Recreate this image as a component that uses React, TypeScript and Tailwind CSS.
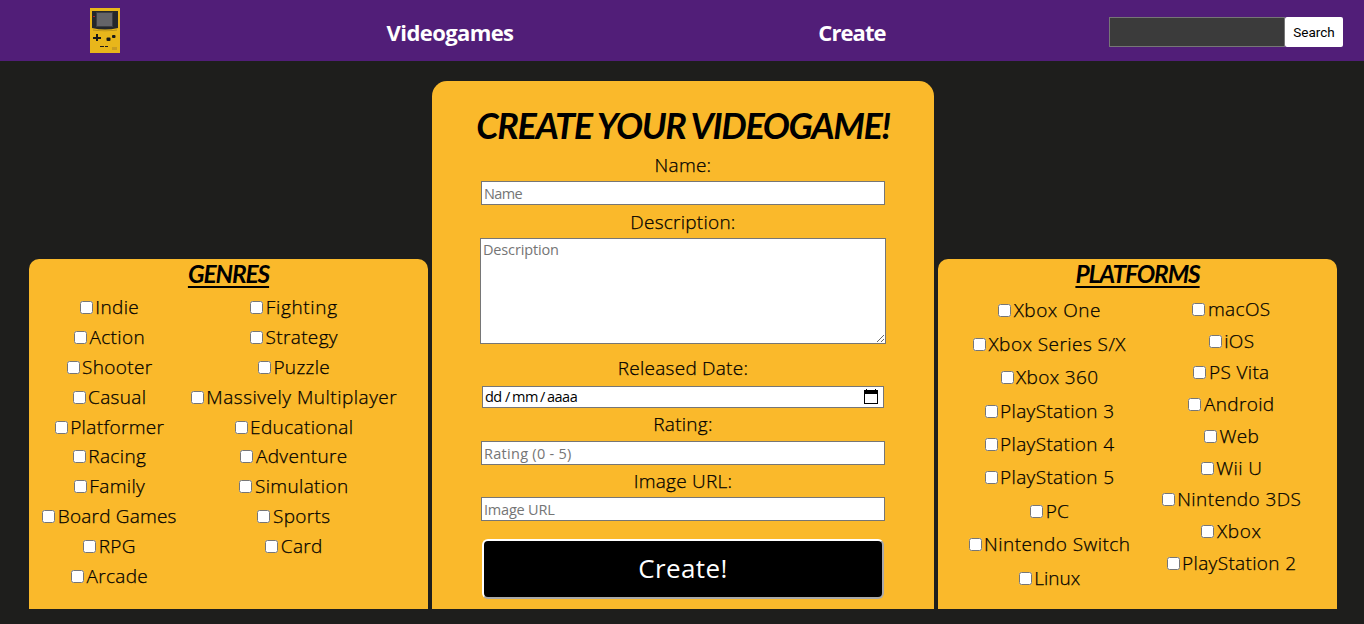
import type { ReactNode } from "react";

type Item = [name: string, tracking?: string];

const genresLeft: Item[] = [["Indie"], ["Action"], ["Shooter"], ["Casual"], ["Platformer"], ["Racing"], ["Family"], ["Board Games", "tracking-[0.2px]"], ["RPG"], ["Arcade"]];
const genresRight: Item[] = [["Fighting", "tracking-[0.65px]"], ["Strategy"], ["Puzzle"], ["Massively Multiplayer", "tracking-[0.5px]"], ["Educational"], ["Adventure"], ["Simulation"], ["Sports"], ["Card"]];
const platformsLeft: Item[] = [["Xbox One", "tracking-[0.5px]"], ["Xbox Series S/X", "tracking-[0.45px]"], ["Xbox 360"], ["PlayStation 3"], ["PlayStation 4"], ["PlayStation 5"], ["PC", "tracking-normal"], ["Nintendo Switch", "tracking-[0.45px]"], ["Linux", "tracking-normal"]];
const platformsRight: Item[] = [["macOS"], ["iOS"], ["PS Vita"], ["Android"], ["Web"], ["Wii U"], ["Nintendo 3DS", "tracking-[0.4px]"], ["Xbox", "tracking-[0.6px]"], ["PlayStation 2"]];

function Logo() {
  return (
    <svg width="30" height="45" viewBox="0 0 30 45">
      <rect width="30" height="45" fill="#e8b61b" />
      <path d="M2 3h26v17q-13 3-26 0z" fill="#24272b" />
      <path d="M3 21.5q12 2 24 0v1q-12 1.500-24 0z" fill="#b08a1c" />
      <rect x="6" y="4" width="17" height="15" fill="#3b3d42" />
      <rect x="7" y="5" width="15" height="13" fill="#646468" />
      <rect x="3" y="8" width="2" height="1" fill="#b3262a" />
      <path d="M6 26h2v3h3v2H8v2H6v-2H3v-2h3z" fill="#191919" />
      <rect x="16.500" y="29.500" width="4" height="3.500" rx="1" fill="#191919" />
      <rect x="22" y="27" width="3.500" height="3" rx="1" fill="#191919" />
      <path d="M10 38h4v1h-4zM15 38h3v1h-3z" fill="#191919" />
      <path d="M22 39h5v3h-5z" fill="#c99c22" />
    </svg>
  );
}

function CheckColumn({ items, col, row }: { items: Item[]; col: string; row: string }) {
  return (
    <div className={"flex flex-col items-center " + col}>
      {items.map(([name, tracking = "tracking-[0.35px]"]) => (
        <label key={name} className={"flex shrink-0 items-center gap-[2.5px] whitespace-nowrap " + row}>
          <input type="checkbox" className="m-0 mt-px h-[13px] w-[13px]" />
          <span className={tracking}>{name}</span>
        </label>
      ))}
    </div>
  );
}

function SidePanel({ title, children }: { title: string; children: ReactNode }) {
  return (
    <section className="flex h-[350px] w-[399px] shrink-0 flex-col rounded-t-[10px] bg-[#fab92b]">
      <h2 className="h-[33px] text-center font-['Lato'] text-[24.5px] leading-[30px] font-bold tracking-[-1.1px] italic underline decoration-2 underline-offset-[3px]">
        {title}
      </h2>
      <div className="flex items-start text-[19px] leading-[26px] font-light [-webkit-text-stroke:0.25px_#000]">{children}</div>
    </section>
  );
}

function CalendarIcon() {
  return (
    <svg width="14" height="16" viewBox="0 0 14 16" shapeRendering="crispEdges">
      <path fill="#000" fillRule="evenodd" d="M2 0h1v1h8V0h1v1h2v14H0V1h2zM1 5v9h12V5z" />
    </svg>
  );
}

const field = "block h-6 w-[404px] border border-[#767676] bg-white px-[2px] font-['Open_Sans'] text-[14.5px] leading-5 placeholder:text-[#757575] placeholder:opacity-100";
const caption = "block text-center text-[19px] leading-[26px] font-light tracking-[0.25px] [-webkit-text-stroke:0.25px_#000]";

export default function App() {
  return (
    <div className="h-[624px] w-[1364px] overflow-hidden bg-[#1e1e1c] font-['Open_Sans','Noto_Sans',sans-serif] text-black">
      <header className="flex h-[61px] items-center bg-[#511e78]">
        <div className="ml-[90px] w-[30px]"><Logo /></div>
        <nav className="flex text-[22px] leading-[30px] font-bold text-white">
          <a className="ml-[230px] w-[200px] pt-[3px] text-center tracking-[-0.6px]">Videogames</a>
          <a className="ml-[202px] w-[200px] pt-[3px] text-center tracking-[-0.9px]">Create</a>
        </nav>
        <form className="mt-[3px] ml-[157px] flex h-[30px]">
          <input className="w-44 border border-[#767676] bg-[#3b3b3b]" />
          <button type="button" className="w-[58px] rounded-[2px] bg-white font-['Roboto'] text-[13.5px]">Search</button>
        </form>
      </header>
      <main className="flex h-[548px] items-end gap-1 pl-[29px]">
        <SidePanel title="GENRES">
          <CheckColumn items={genresLeft} col="w-[161px]" row="h-[29.9px]" />
          <CheckColumn items={genresRight} col="w-[208px]" row="h-[29.9px]" />
        </SidePanel>
        <form className="flex h-[528px] w-[502px] shrink-0 flex-col items-center rounded-t-[15px] bg-[#fab92b]">
          <h1 className="mt-[22px] h-[49px] font-['Lato'] text-[36px] leading-[44px] font-bold tracking-[-1.38px] whitespace-nowrap italic">CREATE YOUR VIDEOGAME!</h1>
          <label className={caption}>Name:</label>
          <input placeholder="Name" className={field + " mt-[3px] tracking-[-0.6px]"} />
          <label className={caption + " mt-[4px]"}>Description:</label>
          <textarea placeholder="Description" className="mt-[3px] block h-[106px] w-[406px] border border-[#767676] bg-white px-[2px] py-px font-['Open_Sans'] text-[14.5px] leading-[19px] tracking-[-0.15px] placeholder:text-[#757575] placeholder:opacity-100" />
          <label className={caption + " mt-[11px]"}>Released Date:</label>
          <div className="mt-[5px] flex h-[22px] w-[402px] items-center justify-between border border-[#767676] bg-white pr-[5px] pl-[2px] text-[14.5px]">
            <div className="flex leading-5 tracking-[-0.5px]">
              <span className="w-5">dd</span><span className="w-[7px]">/</span><span className="w-7">mm</span><span className="w-[7px]">/</span><span>aaaa</span>
            </div>
            <CalendarIcon />
          </div>
          <label className={caption + " mt-[3px]"}>Rating:</label>
          <input placeholder="Rating (0 - 5)" className={field + " mt-[4px] tracking-[0.28px]"} />
          <label className={caption + " mt-[3px]"}>Image URL:</label>
          <input placeholder="Image URL" className={field + " mt-[3px] tracking-[-0.2px]"} />
          <button type="button" className="mt-[18px] h-[60px] w-[402px] rounded-[6px] border-2 border-t-white border-r-[#a9a9a9] border-b-[#a9a9a9] border-l-white bg-black pb-[2px] text-[26px] tracking-[0.4px] text-white">Create!</button>
        </form>
        <SidePanel title="PLATFORMS">
          <CheckColumn items={platformsLeft} col="w-[223px] pt-[1.5px]" row="h-[33.45px]" />
          <CheckColumn items={platformsRight} col="w-[141px] pt-px" row="h-[31.75px]" />
        </SidePanel>
      </main>
    </div>
  );
}
